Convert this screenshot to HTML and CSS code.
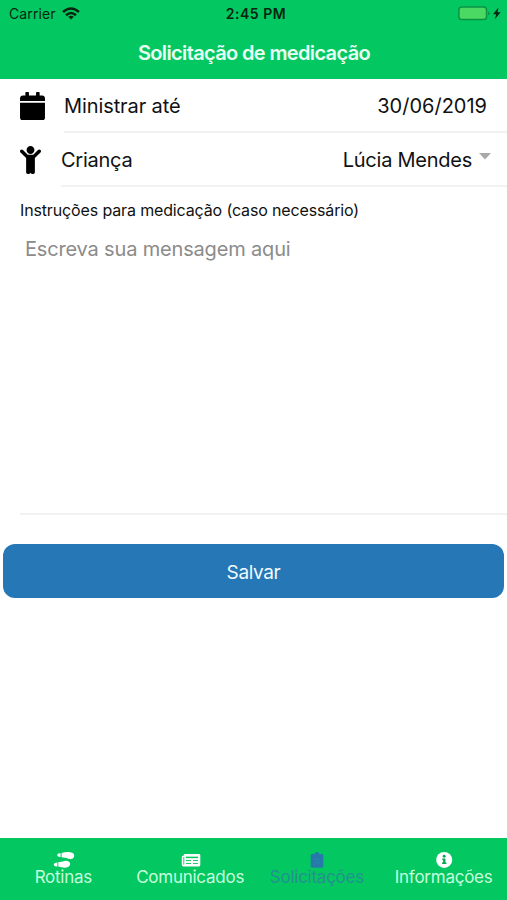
FILE: index.html
```html
<!DOCTYPE html>
<html lang="pt-BR">
<head>
<meta charset="utf-8">
<meta name="viewport" content="width=device-width, initial-scale=1">
<title>Solicitação de medicação</title>
<link rel="stylesheet" href="styles.css">
</head>
<body>
<div class="screen">
  <header class="header">
    <div class="status">
      <div class="status-left">
        <span class="carrier">Carrier</span>
        <svg class="wifi" viewBox="0 0 18 13" width="18" height="13" aria-hidden="true">
          <g fill="none" stroke="#06250f" stroke-width="2.5">
            <path d="M1 5Q9-2 17 5"/>
            <path d="M4 8.200Q9 3.700 14 8.200"/>
          </g>
          <path d="M6.200 9.700Q9 7.600 11.800 9.700L9 12.600Z" fill="#06250f"/>
        </svg>
      </div>
      <span class="time">2:45 PM</span>
      <div class="status-right">
        <svg viewBox="0 0 44 15" width="44" height="15" aria-hidden="true">
          <rect x=".9" y=".9" width="27.600" height="12.700" rx="2.800" fill="#4bd964" stroke="#099443" stroke-width="1.500"/>
          <path d="M30 5.200Q31.600 5.600 31.600 7.200Q31.600 8.800 30 9.300Z" fill="#099443"/>
          <path d="M40.500 1.600L35 8.300H38.300L36.800 13.200L42.600 6.200H39.400Z" fill="#06250f"/>
        </svg>
      </div>
    </div>
    <h1 class="title">Solicitação de medicação</h1>
  </header>

  <main class="form">
    <div class="row">
      <svg class="row-icon" viewBox="0 0 448 512" width="25" height="28.500" aria-hidden="true">
        <path d="M0 464c0 26.500 21.500 48 48 48h352c26.500 0 48-21.500 48-48V192H0zM448 112c0-26.500-21.500-48-48-48h-48V12c0-6.600-5.400-12-12-12h-40c-6.600 0-12 5.400-12 12v52H160V12c0-6.600-5.400-12-12-12h-40c-6.600 0-12 5.400-12 12v52H48C21.500 64 0 85.500 0 112v48h448z"/>
      </svg>
      <div class="row-body">
        <span class="row-label">Ministrar até</span>
        <span class="row-value date">30/06/2019</span>
      </div>
    </div>
    <div class="row child">
      <svg class="row-icon" viewBox="0 0 384 512" width="21" height="28" aria-hidden="true">
        <path d="M120 72c0-39.800 32.200-72 72-72s72 32.200 72 72-32.200 72-72 72-72-32.200-72-72zm254.600 1.400c-12.500-12.500-32.700-12.500-45.200 0L242.700 160H141.300L54.600 73.400c-12.500-12.500-32.700-12.500-45.200 0s-12.500 32.700 0 45.200L112 221.300V480c0 17.700 14.300 32 32 32h16c17.700 0 32-14.300 32-32V368h0v112c0 17.700 14.300 32 32 32h16c17.700 0 32-14.300 32-32V221.300l102.600-102.700c12.500-12.500 12.500-32.700 0-45.200z"/>
      </svg>
      <div class="row-body">
        <span class="row-label">Criança</span>
        <span class="row-value">Lúcia Mendes</span>
        <svg class="caret" viewBox="0 0 12 7" width="12" height="7" aria-hidden="true"><path d="M0 0H12L6 6.500Z" fill="#a9a9a9"/></svg>
      </div>
    </div>
    <div class="instructions">
      <label class="hint" for="message">Instruções para medicação (caso necessário)</label>
      <textarea id="message" class="message" placeholder="Escreva sua mensagem aqui"></textarea>
    </div>
    <button class="save" type="button"><span>Salvar</span></button>
  </main>

  <nav class="tabs">
    <a class="tab">
      <svg viewBox="0 0 22 18" width="22" height="18" aria-hidden="true" fill="#fff">
        <path d="M8.600 2Q12.500.7 16 1Q21 1.500 21.200 4.400Q21.100 7.600 17.700 8Q15.500 8.200 13.600 7L8.600 6.200ZM7.600 2.200Q4.200 2 4.200 4Q4.200 5.800 7.600 6.100Z"/>
        <path d="M5.300 11.300L9.800 10.500Q12 9.400 14.300 9.900Q17.400 10.800 17.100 13.300Q16.400 16.600 11.800 16.700Q8.500 16.600 5.300 15.600ZM4.400 11.500Q.8 11.800.8 13.700Q1 15.600 4.400 15.500Z"/>
      </svg>
      <span>Rotinas</span>
    </a>
    <a class="tab">
      <svg viewBox="0 0 20 18" width="20" height="18" aria-hidden="true">
        <path d="M4 3H18Q19.300 3 19.300 4.300V14.100Q19.300 15.500 18 15.500H2.500Q.8 15.500.8 13.700V5.700Q.8 4.700 2 4.700H2.700V4.300Q2.700 3 4 3Z" fill="#fff"/>
        <path d="M2.800 6V13.500M5 9.500H10M12 9.500H17M5 12.500H10M12 12.500H17" fill="none" stroke="#03c861" stroke-width=".9"/>
        <path d="M5 6.400H17" stroke="#03c861" stroke-width="1.500"/>
      </svg>
      <span>Comunicados</span>
    </a>
    <a class="tab active">
      <svg viewBox="0 0 14 18" width="14" height="18" aria-hidden="true">
        <path d="M2 3H4.500Q4.800.9 7 .9T9.500 3H12Q13.300 3 13.300 4.300V15.300Q13.300 16.700 12 16.700H2Q.7 16.700.7 15.300V4.300Q.7 3 2 3Z" fill="#2779a9"/>
        <path d="M5 8.700H10M5 11.800H10" stroke="#1d91a0" stroke-width=".9"/>
      </svg>
      <span>Solicitações</span>
    </a>
    <a class="tab">
      <svg viewBox="0 0 18 18" width="18" height="18" aria-hidden="true">
        <circle cx="9.200" cy="8.900" r="8" fill="#fff"/>
        <circle cx="9.200" cy="5.200" r="1.450" fill="#03a853"/>
        <path d="M7.200 7.500H10.400V11.600H11.400V13.100H7.100V11.600H8.100V9H7.200Z" fill="#03a853"/>
      </svg>
      <span>Informações</span>
    </a>
  </nav>
</div>
</body>
</html>
```
FILE: styles.css
```css
* {
  box-sizing: border-box;
}

body {
  margin: 0;
  background: #fff;
  color: #111;
  font-family: Inter, "Liberation Sans", sans-serif;
}

.screen {
  display: flex;
  flex-direction: column;
  height: 900px;
}

.header {
  height: 79px;
  background: #03c861;
}

.status {
  display: grid;
  grid-template-columns: 1fr auto 1fr;
  align-items: center;
  height: 27px;
  padding: 0 5px 0 9px;
  color: #06250f;
  font-size: 14px;
  line-height: 27px;
}

.status-left {
  display: flex;
  align-items: center;
  gap: 6px;
}

.carrier {
  letter-spacing: 0.1px;
}

.time {
  margin-left: 1px;
  font-weight: 600;
  letter-spacing: 0.5px;
}

.status-right {
  display: flex;
  justify-content: flex-end;
}

.title {
  margin: 0;
  padding-left: 1px;
  color: #e8fff2;
  font-size: 20px;
  font-weight: 600;
  line-height: 52px;
  letter-spacing: -0.64px;
  text-align: center;
}

.form {
  flex: 1;
}

.row {
  display: grid;
  grid-template-columns: 44px 1fr;
  height: 54px;
  padding-left: 20px;
}

.row-icon {
  align-self: center;
}

.row-body {
  display: flex;
  align-items: center;
  padding: 2px 20px 0 0;
  border-bottom: 2px solid #f2f2f2;
  font-size: 20px;
  letter-spacing: -0.1px;
}

.row-value {
  margin-left: auto;
}

.date {
  letter-spacing: 0;
}

.child {
  grid-template-columns: 41px 1fr;
}

.child .row-body {
  padding-right: 16px;
  letter-spacing: -0.25px;
}

.caret {
  margin: -7px 0 0 7px;
}

.instructions {
  display: flex;
  flex-direction: column;
  height: 328px;
  margin-left: 20px;
  padding-top: 13px;
  border-bottom: 2px solid #f2f2f2;
}

.hint {
  font-size: 16px;
  line-height: 20px;
  letter-spacing: -0.14px;
}

.message {
  flex: 1;
  padding: 15px 5px;
  border: 0;
  outline: 0;
  background: transparent;
  font: 20px/28px Inter, "Liberation Sans", sans-serif;
  letter-spacing: -0.17px;
  resize: none;
}

.message::placeholder {
  color: #8b8b8b;
}

.save {
  display: block;
  width: 501px;
  height: 54px;
  margin: 29px 3px 0;
  padding: 2px 0 0;
  border: 0;
  border-radius: 12px;
  background: #2577b5;
  color: #f0faff;
  font: 19px Inter, "Liberation Sans", sans-serif;
  letter-spacing: -0.35px;
}

.tabs {
  display: grid;
  grid-template-columns: repeat(4, 1fr);
  height: 62px;
  padding-top: 13px;
  background: #03c861;
}

.tab {
  display: flex;
  flex-direction: column;
  align-items: center;
  color: #c6ffdd;
  font-size: 17px;
  line-height: 20px;
  letter-spacing: -0.25px;
}

.tab svg {
  margin-left: 1px;
}

.tab span {
  margin-top: -2px;
}

.active {
  color: #219290;
}
```
